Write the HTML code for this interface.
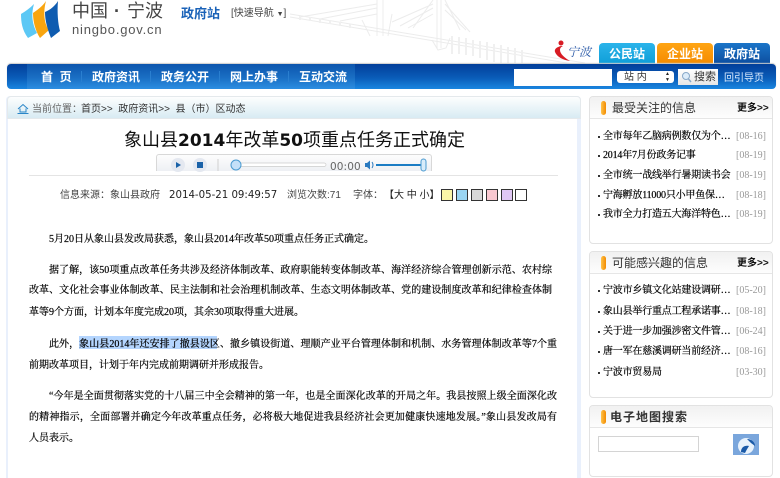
<!DOCTYPE html>
<html><head><meta charset="utf-8"><style>
html,body{margin:0;padding:0;background:#fff}
#p{position:relative;width:780px;height:478px;overflow:hidden;background:#fff;font-family:"Liberation Sans","Noto Sans CJK SC",sans-serif;color:#222}
#p div,#p span.a{position:absolute}
.t{white-space:nowrap}
.b{font-family:"Liberation Serif","Noto Serif CJK SC",serif;font-size:10px;line-height:14px;height:14px;overflow:hidden;color:#000;-webkit-text-stroke:.2px #000;text-align:justify;text-align-last:justify}
.panel{left:589px;width:182px;background:#fff;border:1px solid #e2e2e2;border-radius:4px;overflow:hidden}
.ph{left:0;top:0;width:182px;height:21px;background:linear-gradient(#f1f1f1,#fdfdfd);border-bottom:1px solid #e6e6e6}
.pill{left:11px;top:4px;width:5px;height:14px;border-radius:3px;background:linear-gradient(90deg,#ffc34a,#f28a00)}
.ptitle{left:22px;top:3px;font-size:12px;line-height:16px;color:#333;white-space:nowrap}
.more{left:147px;top:5px;font-size:10px;line-height:14px;color:#111;font-weight:bold;white-space:nowrap}
.it{left:13px;width:133px;font-family:"Liberation Serif","Noto Serif CJK SC",serif;font-size:10px;letter-spacing:-.2px;line-height:14px;color:#000;-webkit-text-stroke:.2px #000;white-space:nowrap;overflow:hidden}
.d{left:146px;font-family:"Liberation Serif",serif;font-size:10px;line-height:14px;color:#999;white-space:nowrap}
.dot{left:8px;width:2px;height:2px;background:#333}
.nv{top:69px;color:#fff;font-size:12px;font-weight:bold;line-height:16px;white-space:nowrap}
.sp{top:71px;width:1px;height:11px;background:#2a7fd0}
.tab{top:43px;width:56px;height:21px;border-radius:4px 4px 0 0;color:#fff;font-size:12px;font-weight:bold;line-height:22px;text-align:center}
.sw{top:189px;width:10px;height:10px;border:1px solid #333}
</style></head><body><div id="p">

<svg style="position:absolute;left:0;top:0" width="780" height="96">
 <g fill="none" stroke="#ececec" stroke-width="1">
  <path d="M290 14 L585 63M290 17 L585 66"/>
  <path d="M377 0V36M383 0V36M370 36L362 20M388 36L392 14"/>
  <path d="M433 0L413 28M437 0V48M441 0V48M445 0L460 30"/>
  <path d="M433 4L392 22M433 8L400 26M433 14L408 28M445 4L470 32M445 10L466 30"/>
  <path d="M377 4L300 17M377 8L320 19M377 14L340 21"/>
  <path d="M432 40L438 50L446 48L450 38"/>
 </g>
 <g stroke="#f0f0f0" stroke-width="2">
  <path d="M452 36V54M459 37V54M466 38V55M473 40V56M480 41V58M487 42V60M494 44V62M501 45V63M508 47V63M515 48V63M522 50V63"/>
  <path d="M300 16V20M310 17V21M320 19V23M330 20V24M340 22V26M350 24V28"/>
 </g>
 <path d="M21 14C26 11 30 8 34 4C31 14 32 24 37 33L28 38C22 30 21 22 21 14Z" fill="#5cc8f5"/>
 <path d="M33 13C37 10 42 7 46 1C43 12 44 24 49 30L40 38C35 30 33 21 33 13Z" fill="#f9a50f"/>
 <path d="M45 12C50 10 55 6 58 1C57 12 58 24 60 31L51 38C47 28 45 20 45 12Z" fill="#0f5cb0"/>
 <path d="M561 46C557 47 554 49 555 52C557 57 563 60 570 61C565 58 560 54 560 50C560 48 561 47 563 46Z" fill="#d81c24"/>
 <circle cx="561" cy="43" r="2.5" fill="#d81c24"/>
</svg>

<div class="t" style="left:72px;top:-1px;font-size:18px;line-height:24px;color:#444">中国</div>
<div class="t" style="left:114px;top:-1px;font-size:18px;line-height:24px;color:#444;font-weight:bold">·</div>
<div class="t" style="left:127px;top:-1px;font-size:18px;line-height:24px;color:#444">宁波</div>
<div class="t" style="left:72px;top:22px;font-size:13px;line-height:16px;color:#555;letter-spacing:.8px">ningbo.gov.cn</div>
<div class="t" style="left:181px;top:5px;font-size:13px;line-height:18px;color:#1a62b8;font-weight:bold">政府站</div>
<div class="t" style="left:231px;top:7px;font-size:10px;line-height:14px;color:#444">[快速导航 <span style="font-size:7px">▼</span>]</div>
<div class="t" style="left:567px;top:44px;font-family:'Liberation Serif','Noto Serif CJK SC',serif;font-style:italic;font-size:12px;line-height:16px;color:#2a5aa8">宁波</div>

<div class="tab" style="left:599px;background:linear-gradient(#2bb4ea,#0f9fd8)">公民站</div>
<div class="tab" style="left:657px;background:linear-gradient(#ffa514,#f58b00)">企业站</div>
<div class="tab" style="left:714px;background:linear-gradient(#1b75c8,#0d4ea0)">政府站</div>

<div style="left:7px;top:64px;width:769px;height:25px;border-radius:4px;background:linear-gradient(#023f9a,#0a5cb8 55%,#1a86e0);box-shadow:0 -1px 1px #ccc"></div>
<div style="left:27px;top:64px;width:328px;height:25px;background:linear-gradient(#0d55ad,#1a6fc4 55%,#2c8ee2)"></div>
<div class="nv" style="left:41px">首&nbsp;&nbsp;页</div>
<div class="sp" style="left:81px"></div>
<div class="nv" style="left:92px">政府资讯</div>
<div class="sp" style="left:150px"></div>
<div class="nv" style="left:161px">政务公开</div>
<div class="sp" style="left:219px"></div>
<div class="nv" style="left:230px">网上办事</div>
<div class="sp" style="left:288px"></div>
<div class="nv" style="left:299px">互动交流</div>
<div style="left:514px;top:69px;width:98px;height:17px;background:#fff"></div>
<div style="left:617px;top:71px;width:57px;height:12px;background:#fff;border-radius:3px"></div>
<div class="t" style="left:624px;top:71px;font-size:10px;line-height:14px;color:#333">站 内</div>
<div class="t" style="left:665px;top:71px;font-size:5px;line-height:6px;color:#222">▲<br>▼</div>
<div style="left:678px;top:69px;width:40px;height:16px;background:linear-gradient(#fff,#e6e6e6)"></div>
<svg style="position:absolute;left:681px;top:71px" width="11" height="12"><circle cx="5" cy="5" r="3.5" fill="#dcecfa" stroke="#88a8c8"/><path d="M7.5 8L10 11" stroke="#88a8c8" stroke-width="1.5"/></svg>
<div class="t" style="left:694px;top:70px;font-size:11px;line-height:14px;color:#333">搜索</div>
<div class="t" style="left:724px;top:72px;font-size:10px;line-height:14px;color:#dcecff">回引导页</div>

<div style="left:6px;top:96px;width:575px;height:382px;background:#e9f0fc;border-radius:4px 4px 0 0"></div>
<div style="left:8px;top:118px;width:569px;height:360px;background:#fff"></div>
<div style="left:7px;top:96px;width:572px;height:21px;border:1px solid #e4e9ec;border-radius:4px 4px 0 0;background:linear-gradient(#fdfefe,#d8ebf3)"></div>
<svg style="position:absolute;left:17px;top:103px" width="12" height="11"><path d="M1 6L6 1.5L11 6M3 5.5V9H9V5.5M0.5 10.5H11.5" fill="none" stroke="#2a86c8" stroke-width="1"/></svg>
<div class="t" style="left:32px;top:103px;font-size:10px;line-height:14px;color:#666">当前位置：</div>
<div class="t" style="left:81px;top:103px;font-size:10px;line-height:14px;color:#333">首页&gt;&gt;&nbsp;&nbsp;政府资讯&gt;&gt;&nbsp;&nbsp;县（市）区动态</div>

<div class="t" style="left:124px;top:128px;font-size:18px;line-height:24px;color:#111">象山县<b style="font-family:'DejaVu Sans',sans-serif;font-size:17px">2014</b>年改革<b style="font-family:'DejaVu Sans',sans-serif;font-size:17px">50</b>项重点任务正式确定</div>

<div style="left:156px;top:154px;width:274px;height:16px;border:1px solid #d8d8d8;border-bottom:0;border-radius:3px 3px 0 0;background:linear-gradient(#fdfdfd,#eef0f4)"></div>
<svg style="position:absolute;left:156px;top:154px" width="276" height="18">
 <circle cx="22" cy="11" r="7" fill="#e4e8f0"/><path d="M20 8L25 11L20 14Z" fill="#1a62a8"/>
 <circle cx="44" cy="11" r="7" fill="#e4e8f0"/><rect x="41" y="8" width="6" height="6" fill="#1a62a8"/>
 <path d="M62 5V17" stroke="#d0d0d0"/>
 <rect x="80" y="9" width="90" height="3.5" rx="2" fill="#fff" stroke="#ccc" stroke-width=".7"/>
 <circle cx="80" cy="11" r="5" fill="#c4e0f8" stroke="#4a9ad0"/>
 <path d="M209 9H211L214 6.5V15.5L211 13H209Z" fill="#2a7ac0"/><path d="M216 8Q218 11 216 14" fill="none" stroke="#2a7ac0"/>
 <path d="M220 11H268" stroke="#1a7cc4" stroke-width="2"/>
 <rect x="265" y="5" width="5" height="12" rx="2.5" fill="#d8ecfa" stroke="#4a9ad0"/>
</svg>
<div class="t" style="left:330px;top:160px;font-size:10.5px;line-height:14px;color:#666;font-family:'DejaVu Sans',sans-serif;letter-spacing:.1px">00:00</div>

<div style="left:29px;top:175px;width:529px;height:1px;background:#e4e4e4"></div>

<div class="t" style="left:60px;top:189px;font-size:10px;line-height:14px;color:#444">信息来源：象山县政府</div>
<div class="t" style="left:169px;top:189px;font-size:10.2px;line-height:14px;color:#222;font-family:'DejaVu Sans',sans-serif;">2014-05-21 09:49:57</div>
<div class="t" style="left:287px;top:189px;font-size:10px;line-height:14px;color:#444">浏览次数:71</div>
<div class="t" style="left:353px;top:189px;font-size:10px;line-height:14px;color:#444">字体：</div>
<div class="t" style="left:384px;top:189px;font-size:10px;line-height:14px;color:#222">【大 中 小】</div>
<div class="sw" style="left:441px;background:#fbf6a8"></div>
<div class="sw" style="left:456px;background:#9ad5f2"></div>
<div class="sw" style="left:471px;background:#d8d8d8"></div>
<div class="sw" style="left:486px;background:#f8c8d0"></div>
<div class="sw" style="left:501px;background:#e0c8f4"></div>
<div class="sw" style="left:515px;background:#fff"></div>

<div class="b" style="left:49px;top:233px;width:345px;text-align-last:left">5月20日从象山县发改局获悉，象山县2014年改革50项重点任务正式确定。</div>
<div class="b" style="left:49px;top:264px;width:503px">据了解，该50项重点改革任务共涉及经济体制改革、政府职能转变体制改革、海洋经济综合管理创新示范、农村综合</div>
<div class="b" style="left:29px;top:284px;width:523px">改革、文化社会事业体制改革、民主法制和社会治理机制改革、生态文明体制改革、党的建设制度改革和纪律检查体制改</div>
<div class="b" style="left:29px;top:306px;width:300px;text-align-last:left">革等9个方面，计划本年度完成20项，其余30项取得重大进展。</div>
<div style="left:79px;top:336px;width:138px;height:13px;background:#b4d5fe"></div>
<div class="b" style="left:49px;top:338px;width:508px">此外，象山县2014年还安排了撤县设区、撤乡镇设街道、理顺产业平台管理体制和机制、水务管理体制改革等7个重大</div>
<div class="b" style="left:29px;top:359px;width:300px;text-align-last:left">前期改革项目，计划于年内完成前期调研并形成报告。</div>
<div class="b" style="left:49px;top:390px;width:508px">“今年是全面贯彻落实党的十八届三中全会精神的第一年，也是全面深化改革的开局之年。我县按照上级全面深化改革</div>
<div class="b" style="left:29px;top:411px;width:528px">的精神指示，全面部署并确定今年改革重点任务，必将极大地促进我县经济社会更加健康快速地发展。”象山县发改局有关</div>
<div class="b" style="left:29px;top:432px;width:100px;text-align-last:left">人员表示。</div>

<div class="panel" style="top:96px;height:146px">
 <div class="ph"></div><div class="pill"></div><div class="ptitle">最受关注的信息</div><div class="more">更多&gt;&gt;</div>
 <div class="dot" style="top:39px"></div><div class="it" style="top:33px">全市每年乙脑病例数仅为个…</div><div class="d" style="top:33px">[08-16]</div>
 <div class="dot" style="top:58px"></div><div class="it" style="top:52px">2014年7月份政务记事</div><div class="d" style="top:52px">[08-19]</div>
 <div class="dot" style="top:78px"></div><div class="it" style="top:72px">全市统一战线举行暑期读书会</div><div class="d" style="top:72px">[08-19]</div>
 <div class="dot" style="top:98px"></div><div class="it" style="top:92px">宁海孵放11000只小甲鱼保…</div><div class="d" style="top:92px">[08-18]</div>
 <div class="dot" style="top:117px"></div><div class="it" style="top:111px">我市全力打造五大海洋特色…</div><div class="d" style="top:111px">[08-19]</div>
</div>

<div class="panel" style="top:251px;height:145px">
 <div class="ph"></div><div class="pill"></div><div class="ptitle">可能感兴趣的信息</div><div class="more">更多&gt;&gt;</div>
 <div class="dot" style="top:38px"></div><div class="it" style="top:32px">宁波市乡镇文化站建设调研…</div><div class="d" style="top:32px">[05-20]</div>
 <div class="dot" style="top:59px"></div><div class="it" style="top:53px">象山县举行重点工程承诺事…</div><div class="d" style="top:53px">[08-18]</div>
 <div class="dot" style="top:79px"></div><div class="it" style="top:73px">关于进一步加强涉密文件管…</div><div class="d" style="top:73px">[06-24]</div>
 <div class="dot" style="top:99px"></div><div class="it" style="top:93px">唐一军在慈溪调研当前经济…</div><div class="d" style="top:93px">[08-16]</div>
 <div class="dot" style="top:120px"></div><div class="it" style="top:114px">宁波市贸易局</div><div class="d" style="top:114px">[03-30]</div>
</div>

<div class="panel" style="top:405px;height:70px">
 <div class="ph"></div><div class="pill"></div><div class="ptitle" style="left:20px;font-weight:bold;letter-spacing:1px">电子地图搜索</div>
 <div style="left:8px;top:30px;width:99px;height:14px;border:1px solid #d4d4d4;background:#fff"></div>
 <svg style="position:absolute;left:143px;top:28px" width="26" height="21"><rect width="26" height="21" fill="#7aa6dc"/><circle cx="13" cy="12" r="8" fill="#e8f2fc"/><path d="M8 18C8 13 12 11 16 12C14 15 13 17 12 19Z" fill="#1a5aa8"/><path d="M14 5C18 5 22 8 22 12L18 9Z" fill="#1a5aa8"/></svg>
</div>

</div></body></html>
